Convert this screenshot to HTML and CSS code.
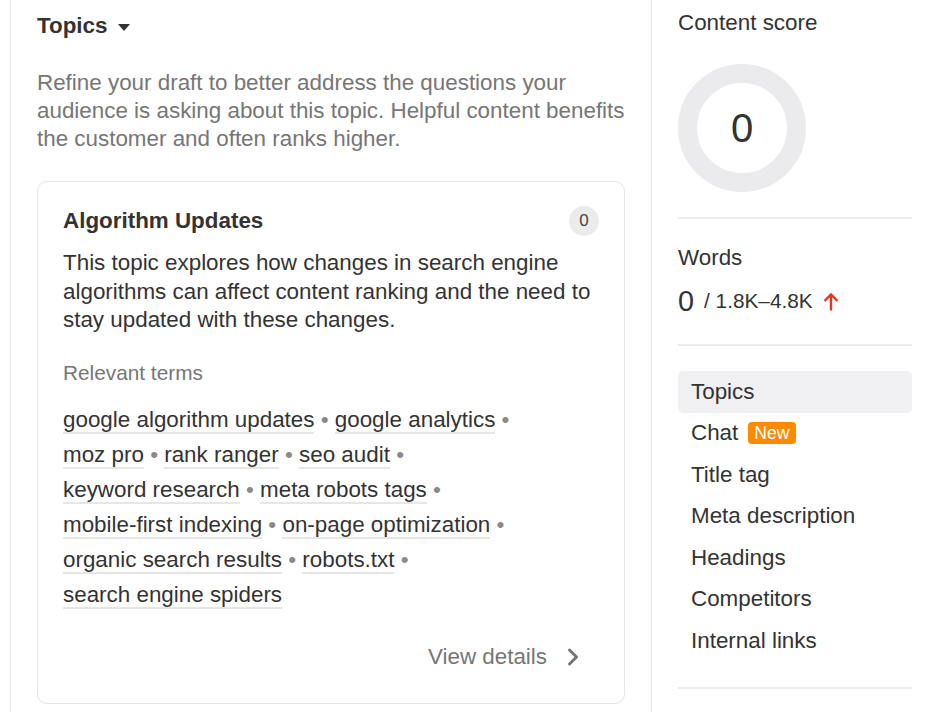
FILE: index.html
```html
<!DOCTYPE html>
<html>
<head>
<meta charset="utf-8">
<link rel="stylesheet" href="styles.css">
</head>
<body>
<div class="layout">
  <main class="main">
    <h2 class="section-title">Topics <span class="caret"></span></h2>
    <p class="intro">Refine your draft to better address the questions your audience is asking about this topic. Helpful content benefits the customer and often ranks higher.</p>
    <section class="card">
      <div class="card-head">
        <h3 class="card-title">Algorithm Updates</h3>
        <span class="count">0</span>
      </div>
      <p class="card-desc">This topic explores how changes in search engine algorithms can affect content ranking and the need to stay updated with these changes.</p>
      <div class="terms-label">Relevant terms</div>
      <div class="terms">
        <span class="item"><span class="term">google algorithm updates</span> <span class="dot">•</span></span>
        <span class="item"><span class="term">google analytics</span> <span class="dot">•</span></span>
        <span class="item"><span class="term">moz pro</span> <span class="dot">•</span></span>
        <span class="item"><span class="term">rank ranger</span> <span class="dot">•</span></span>
        <span class="item"><span class="term">seo audit</span> <span class="dot">•</span></span>
        <span class="item"><span class="term">keyword research</span> <span class="dot">•</span></span>
        <span class="item"><span class="term">meta robots tags</span> <span class="dot">•</span></span>
        <span class="item"><span class="term">mobile-first indexing</span> <span class="dot">•</span></span>
        <span class="item"><span class="term">on-page optimization</span> <span class="dot">•</span></span>
        <span class="item"><span class="term">organic search results</span> <span class="dot">•</span></span>
        <span class="item"><span class="term">robots.txt</span> <span class="dot">•</span></span>
        <span class="item"><span class="term">search engine spiders</span></span>
      </div>
      <div class="card-foot">
        <span class="view">View details</span>
        <svg class="chev" width="14" height="20" viewBox="0 0 14 20"><path d="M3.5 3 L10.5 10 L3.5 17" fill="none" stroke="#767676" stroke-width="3" stroke-linecap="round" stroke-linejoin="round"/></svg>
      </div>
    </section>
  </main>
  <aside class="side">
    <div class="label">Content score</div>
    <div class="donut"><span>0</span></div>
    <hr class="rule rule-thick">
    <div class="label words-label">Words</div>
    <div class="words">
      <span class="words-count">0</span>
      <span class="words-range">/ 1.8K–4.8K</span>
      <svg class="arrow" width="18" height="20" viewBox="0 0 18 20"><path d="M9 18.5 V2.5 M2.5 9 L9 2.5 L15.5 9" fill="none" stroke="#e5332a" stroke-width="2.4" stroke-linejoin="miter"/></svg>
    </div>
    <hr class="rule">
    <nav class="nav">
      <div class="nav-item active">Topics</div>
      <div class="nav-item">Chat <span class="new">New</span></div>
      <div class="nav-item">Title tag</div>
      <div class="nav-item">Meta description</div>
      <div class="nav-item">Headings</div>
      <div class="nav-item">Competitors</div>
      <div class="nav-item">Internal links</div>
    </nav>
    <hr class="rule rule-last">
  </aside>
</div>
</body>
</html>
```

FILE: styles.css
```css
* { box-sizing: border-box; }
html, body { margin: 0; padding: 0; background: #fff; }
body {
  font-family: "Liberation Sans", Arial, sans-serif;
  color: #333;
  font-size: 22.4px;
}
.layout {
  display: flex;
  height: 712px;
  overflow: hidden;
}
.main {
  margin-left: 10px;
  width: 642px;
  flex: none;
  border-left: 1px solid #e8e8e8;
  border-right: 1px solid #e8e8e8;
  padding: 12px 26px 0 26px;
}
.section-title {
  margin: 0;
  font-size: 22.4px;
  line-height: 28px;
  font-weight: bold;
  color: #333;
  display: flex;
  align-items: center;
}
.caret {
  display: inline-block;
  width: 0; height: 0;
  border-left: 6px solid transparent;
  border-right: 6px solid transparent;
  border-top: 7px solid #333;
  margin-left: 10px;
  margin-top: 2px;
}
.intro {
  margin: 29px 0 0;
  line-height: 28px;
  color: #767676;
}
.card {
  margin-top: 28px;
  border: 1px solid #e5e5e5;
  border-radius: 10px;
  padding: 24px 25px 32px;
}
.card-head {
  display: flex;
  align-items: center;
  justify-content: space-between;
  height: 30px;
}
.card-title {
  margin: 0;
  font-size: 22.4px;
  line-height: 28px;
  font-weight: bold;
}
.count {
  width: 30px; height: 30px;
  border-radius: 50%;
  background: #ebebeb;
  color: #444;
  font-size: 17px;
  display: flex;
  align-items: center;
  justify-content: center;
}
.card-desc {
  margin: 13px 0 0;
  line-height: 28.6px;
}
.terms-label {
  margin-top: 24px;
  font-size: 20.8px;
  line-height: 28px;
  color: #767676;
}
.terms {
  margin-top: 15px;
  line-height: 35px;
}
.item { white-space: nowrap; }
.term { border-bottom: 2px solid #e6e6e6; }
.dot { color: #8a8a8a; }
.card-foot {
  margin-top: 31px;
  display: flex;
  justify-content: flex-end;
  align-items: center;
  gap: 19px;
  padding-right: 19px;
  line-height: 28px;
  color: #767676;
}
.chev { display: block; }
.side {
  flex: 1;
  padding: 9px 22px 0 26px;
}
.label { line-height: 28px; }
.donut {
  margin-top: 27px;
  width: 128px; height: 128px;
  border-radius: 50%;
  border: 19px solid #ebebed;
  display: flex;
  align-items: center;
  justify-content: center;
  font-size: 40px;
}
.rule {
  margin: 25px 0 0;
  border: 0;
  height: 2px;
  background: #ececec;
}
.rule-thick { margin-top: 25px; }
.rule-last { margin-top: 25px; }
.words-label { margin-top: 25px; }
.words {
  margin-top: 11px;
  height: 36px;
  display: flex;
  align-items: center;
}
.words-count { font-size: 28.8px; }
.words-range { font-size: 20.8px; margin-left: 10px; }
.arrow { margin-left: 9px; margin-top: 2px; }
.nav { margin-top: 25px; }
.nav-item {
  height: 41.5px;
  display: flex;
  align-items: center;
  padding: 0 13px;
  border-radius: 5px;
}
.nav-item.active { background: #f0f0f2; }
.new {
  margin-left: 10px;
  background: #ff8a00;
  color: #fff;
  font-size: 17.6px;
  line-height: 22px;
  padding: 0 6px;
  border-radius: 4px;
}
```
